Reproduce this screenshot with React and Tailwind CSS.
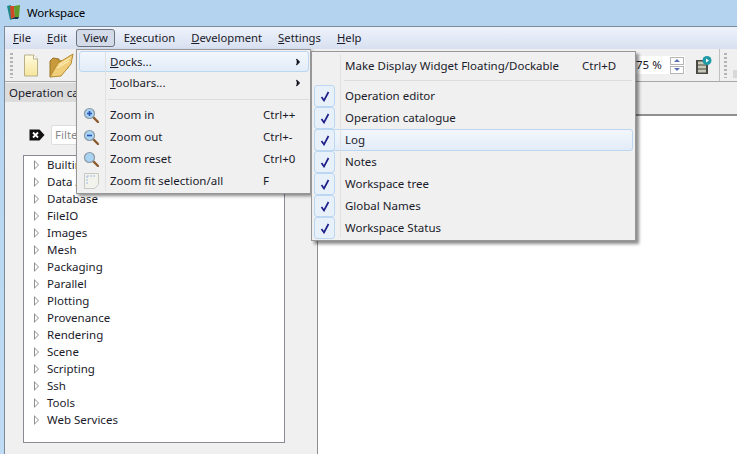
import { ChevronRight } from "lucide-react";

const FONT = "font-['Noto_Sans','Open_Sans',sans-serif]";

const TREE_ITEMS = [
  "Builtin",
  "Data Analysis",
  "Database",
  "FileIO",
  "Images",
  "Mesh",
  "Packaging",
  "Parallel",
  "Plotting",
  "Provenance",
  "Rendering",
  "Scene",
  "Scripting",
  "Ssh",
  "Tools",
  "Web Services",
];

const DOCKS = [
  "Operation editor",
  "Operation catalogue",
  "Log",
  "Notes",
  "Workspace tree",
  "Global Names",
  "Workspace Status",
];

const ZOOMS = [
  { label: "Zoom in", key: "Ctrl++", sign: "plus" },
  { label: "Zoom out", key: "Ctrl+-", sign: "minus" },
  { label: "Zoom reset", key: "Ctrl+0" },
];

function Mnemonic({ first, rest }) {
  return (
    <span>
      <span className="underline">{first}</span>
      {rest}
    </span>
  );
}

function Magnifier({ sign }) {
  return (
    <svg width="16" height="16" viewBox="0 0 16 16">
      <path d="M10 10l5 5" stroke="#8a5a2b" strokeWidth="2.4" strokeLinecap="round" />
      <circle cx="6.5" cy="6.5" r="5" fill="#a9d3f2" stroke="#8b99a5" strokeWidth="1.2" />
      {sign && <path d="M4 6.5h5" stroke="#2a55b5" strokeWidth="1.6" />}
      {sign === "plus" && <path d="M6.5 4v5" stroke="#2a55b5" strokeWidth="1.6" />}
    </svg>
  );
}

function FitIcon() {
  return (
    <svg width="15" height="16" viewBox="0 0 15 16">
      <path d="M.5.5h14v11l-4 4H.5z" fill="#f3f3ee" stroke="#c9c9c4" />
      <path d="M3 3v8M3 3h8" stroke="#9dbbe0" strokeDasharray="2 1" fill="none" />
    </svg>
  );
}

function NewIcon() {
  return (
    <svg width="14" height="23" viewBox="0 0 14 23">
      <defs>
        <linearGradient id="page" x1="0" y1="0" x2="0" y2="1">
          <stop offset="0" stopColor="#fffbe0" />
          <stop offset="1" stopColor="#f6e59a" />
        </linearGradient>
      </defs>
      <path d="M.5 1h9l4 4v17H.5z" fill="url(#page)" stroke="#b9b08a" />
      <path d="M9.5 1v4h4" fill="#fff" stroke="#b9b08a" />
    </svg>
  );
}

function OpenIcon() {
  return (
    <svg width="25" height="26" viewBox="0 0 25 26">
      <path d="M1 25V9l3-3 6 1 0 2 9-1v8z" fill="#c89a3c" stroke="#9a7426" />
      <path d="M1 25L9 11 24 2l-2 10-10 12z" fill="#f1cf7a" stroke="#b58c32" />
      <path d="M10 13l11-7M8 16l12-7" stroke="#fff2c4" />
    </svg>
  );
}

function FilmIcon() {
  return (
    <svg width="17" height="19" viewBox="0 0 17 19">
      <rect x="1" y="4" width="12" height="14" fill="#4a4a44" />
      <path d="M3 5.500h8v3H3zM3 9.500h8v3H3zM3 13.500h8v3H3z" fill="#c7c8b8" />
      <circle cx="12" cy="4.500" r="4.500" fill="#1f9aa8" />
      <path d="M11 2.500l3 2-3 2z" fill="#fff" />
    </svg>
  );
}

function AppLogo() {
  return (
    <svg width="13" height="15" viewBox="0 0 13 15">
      <path d="M0 1l4-1 2 14-3 1z" fill="#1d8a8a" />
      <path d="M3 1h4l1 11-4 2z" fill="#d2492a" />
      <path d="M7 1l6-1-1 12-4 2z" fill="#5f9a2a" />
      <path d="M4 14l4-2 4 0-1 2z" fill="#163a4a" />
    </svg>
  );
}

function Grip() {
  return <div className="h-[25px] w-[3px] bg-[repeating-linear-gradient(to_bottom,#b4b4b4_0,#b4b4b4_2px,transparent_2px,transparent_4px)]" />;
}

function ViewMenu() {
  return (
    <div className="absolute left-[76px] top-[49px] flex h-[145px] w-[235px] flex-col border border-[#979797] bg-[#f0f0f0] py-[1px] pl-[2px] pr-[1px] text-[#1a1a2a] shadow-[2px_2px_3px_rgba(0,0,0,0.45)]">
      <div className="absolute bottom-[2px] left-[28px] top-[2px] w-[1px] bg-[#e2e2e2]" />
      <div className="flex h-[21px] items-center justify-between rounded-[3px] border border-[#bcd7f2] bg-gradient-to-b from-[#f3f7fc] to-[#e2ecf8] pl-[30px] pr-[5px]">
        <Mnemonic first="D" rest="ocks..." />
        <ChevronRight size={10} fill="#000" strokeWidth={3} />
      </div>
      <div className="flex h-[22px] items-center justify-between pl-[31px] pr-[6px]">
        <Mnemonic first="T" rest="oolbars..." />
        <ChevronRight size={10} fill="#000" strokeWidth={3} />
      </div>
      <div className="ml-[29px] mt-[5px] mb-[4px] h-[1px] bg-[#dcdcdc]" />
      {ZOOMS.map((z) => (
        <div key={z.label} className="flex h-[22px] items-center pl-[4px]">
          <Magnifier sign={z.sign} />
          <span className="ml-[11px] w-[153px]">{z.label}</span>
          <span>{z.key}</span>
        </div>
      ))}
      <div className="flex h-[22px] items-center pl-[5px]">
        <FitIcon />
        <span className="ml-[11px] w-[153px]">Zoom fit selection/all</span>
        <span>F</span>
      </div>
    </div>
  );
}

function DocksMenu() {
  return (
    <div className="absolute left-[311px] top-[51px] flex h-[190px] w-[325px] flex-col border border-[#979797] bg-[#f0f0f0] pl-[2px] pr-[2px] text-[#1a1a2a] shadow-[3px_3px_3px_rgba(0,0,0,0.45)]">
      <div className="absolute bottom-[2px] left-[28px] top-[2px] w-[1px] bg-[#e2e2e2]" />
      <div className="flex h-[28px] items-center pl-[31px]">
        <span className="w-[237px]">Make Display Widget Floating/Dockable</span>
        <span>Ctrl+D</span>
      </div>
      <div className="mb-[4px] ml-[30px] mr-[1px] h-[1px] bg-[#dcdcdc]" />
      {DOCKS.map((name) => (
        <div
          key={name}
          className={
            name === "Log"
              ? "flex h-[22px] items-center rounded-[3px] border border-[#bcd7f2] bg-gradient-to-b from-[#f3f7fc] to-[#e2ecf8]"
              : "flex h-[22px] items-center"
          }
        >
          <div className={name === "Log" ? "-ml-[1px] flex h-[22px] w-[21px] items-center justify-center rounded-[3px] border border-[#bcd7f2] bg-[#e8f0fa]" : "flex h-[22px] w-[21px] items-center justify-center rounded-[3px] border border-[#bcd7f2] bg-[#e8f0fa]"}>
            <svg width="10" height="11" viewBox="0 0 10 11">
              <path d="M1.500 6l2.500 3.500L8.500 1" fill="none" stroke="#20208a" strokeWidth="1.700" />
            </svg>
          </div>
          <span className="ml-[10px]">{name}</span>
        </div>
      ))}
    </div>
  );
}

export default function App() {
  return (
    <div className={`${FONT} relative h-[454px] w-[737px] overflow-hidden bg-gradient-to-b from-[#b4d3ef] to-[#c0dcf4] text-[11.5px] text-[#1a1a2a]`}>
      <div className="flex h-[26px] items-center pb-[1px] pl-[7px] text-black">
        <AppLogo />
        <span className="ml-[7px] tracking-[-0.15px]">Workspace</span>
      </div>

      <div className="ml-[4px] flex h-[428px] flex-col border-l border-t border-[#7d8a99] bg-[#f0f0f0]">
        {/* Menu bar */}
        <div className="flex h-[22px] items-center gap-[2px] bg-gradient-to-b from-[#eef2fb] to-[#d8e0f0] pl-[1px] text-[11.25px]">
          <div className="border border-transparent px-[6px]"><Mnemonic first="F" rest="ile" /></div>
          <div className="border border-transparent px-[6px]"><Mnemonic first="E" rest="dit" /></div>
          <div className="rounded-[3px] border border-[#6b7280] bg-[#d3dbe8] px-[6px]">View</div>
          <div className="border border-transparent px-[6px]">E<span className="underline">x</span>ecution</div>
          <div className="border border-transparent px-[6px]"><Mnemonic first="D" rest="evelopment" /></div>
          <div className="border border-transparent px-[6px]"><Mnemonic first="S" rest="ettings" /></div>
          <div className="border border-transparent px-[6px]"><Mnemonic first="H" rest="elp" /></div>
        </div>

        {/* Toolbar */}
        <div className="flex h-[33px] items-center border-b border-[#a8a8a8] bg-[#f0f0f0] pl-[5px]">
          <Grip />
          <div className="ml-[11px]"><NewIcon /></div>
          <div className="ml-[11px]"><OpenIcon /></div>
          <div className="ml-auto flex items-center">
            <div className="flex h-[18px] w-[55px] items-center justify-between bg-white pl-[6px] pr-[1px]">
              <span>75 %</span>
              <div className="flex flex-col gap-[1px]">
                <div className="flex h-[8px] w-[14px] items-center justify-center border border-[#b5b5b5]">
                  <div className="h-0 w-0 border-x-[3px] border-b-[3px] border-x-transparent border-b-[#5a6fb0]" />
                </div>
                <div className="flex h-[8px] w-[14px] items-center justify-center border border-[#b5b5b5]">
                  <div className="h-0 w-0 border-x-[3px] border-t-[3px] border-x-transparent border-t-[#5a6fb0]" />
                </div>
              </div>
            </div>
            <div className="ml-[10px]"><FilmIcon /></div>
            <div className="ml-[7px] mr-[4px] h-[32px] w-[1px] bg-[#c0c0c0]" />
            <Grip />
            <div className="ml-[6px] h-[25px] w-[4px] bg-[linear-gradient(to_bottom,transparent_70%,#d8d8d8_70%)]" />
          </div>
        </div>

        <div className="flex min-h-0 flex-1">
          {/* Operation catalogue dock */}
          <div className="flex w-[312px] flex-col pr-[1px]">
            <div className="mt-[1px] flex h-[19px] items-center bg-[#dcdcdc] pl-[4px]">Operation catalogue</div>
            <div className="flex items-center pl-[24px] pt-[23px]">
              <svg width="16" height="14" viewBox="0 0 16 14">
                <path d="M.5 1.500h10l5 5.500-5 5.500H.5z" fill="#111" />
                <path d="M4 4.500l5 5M9 4.500l-5 5" stroke="#fff" strokeWidth="1.800" />
              </svg>
              <div className="ml-[6px] mr-[28px] flex h-[20px] flex-1 items-center rounded-[2px] border border-[#dedede] bg-white pl-[3px] text-[#8a8a8a]">Filter</div>
            </div>
            <div className="ml-[18px] mt-[10px] h-[288px] w-[262px] border border-[#8a8a96] bg-white pl-[10px]">
              {TREE_ITEMS.map((item) => (
                <div key={item} className="flex h-[17px] items-center">
                  <div className="relative h-0 w-0 border-y-[5px] border-l-[5px] border-y-transparent border-l-[#8f8f8f]">
                    <div className="absolute -left-[4px] -top-[3px] h-0 w-0 border-y-[3px] border-l-[3px] border-y-transparent border-l-white" />
                  </div>
                  <span className="ml-[8px]">{item}</span>
                </div>
              ))}
            </div>
          </div>

          {/* Display area */}
          <div className="flex flex-1 flex-col">
            <div className="h-[34px] border-b-2 border-[#8f8f8f]" />
            <div className="flex-1 border-l border-[#8f8f8f] bg-white" />
          </div>
        </div>
      </div>

      <ViewMenu />
      <DocksMenu />
    </div>
  );
}
